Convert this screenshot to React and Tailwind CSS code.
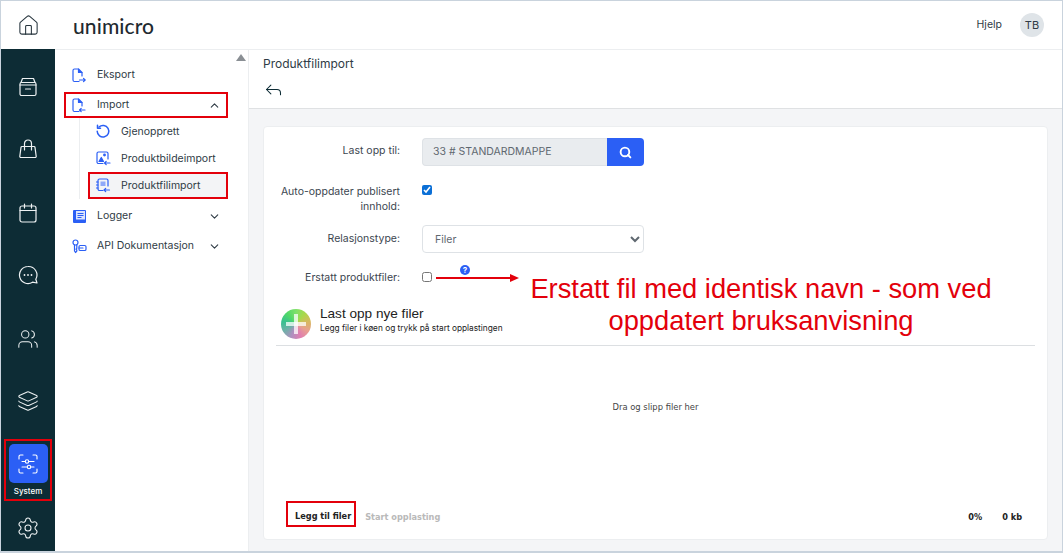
import { ChevronDown, ChevronUp, House, Layers, Reply, Search, Settings, Users } from "lucide-react";

const Rail = ({ children }) => (
  <svg width="20" height="20" viewBox="0 0 20 20" fill="none" stroke="#eef2f3" strokeWidth="1.200" strokeLinecap="round" strokeLinejoin="round">
    {children}
  </svg>
);

const ArchiveIcon = () => (
  <Rail>
    <path d="M3 5.500 4.500 1.500h11L17 5.500" />
    <rect x="2" y="5.500" width="16" height="13" rx="1.500" />
    <path d="M2 8h16M7.500 12h5" />
  </Rail>
);

const BagIcon = () => (
  <Rail>
    <path d="M4 7.500h12a1 1 0 0 1 1 .9l1.200 9a1 1 0 0 1-1 1.100H2.800a1 1 0 0 1-1-1.100l1.200-9a1 1 0 0 1 1-.9z" />
    <path d="M6.500 11V4.500a3.500 3.500 0 0 1 7 0V11" />
  </Rail>
);

const CalendarIcon = () => (
  <Rail>
    <rect x="2" y="3" width="16" height="16" rx="2" />
    <path d="M2 7.500h16M6.500 1v4M13.500 1v4" />
  </Rail>
);

const ChatIcon = () => (
  <Rail>
    <path d="M10 1.500a8.500 8.500 0 1 0 4.500 15.700l4.500.8-1.200-3.800A8.500 8.500 0 0 0 10 1.500z" />
    <path d="M6.500 10h.01M10 10h.01M13.500 10h.01" strokeWidth="1.800" />
  </Rail>
);

const Doc = ({ children }) => (
  <svg width="15" height="15" viewBox="0 0 15 15" fill="none" stroke="#2b5ff5" strokeWidth="1.200" strokeLinecap="round" strokeLinejoin="round">
    {children}
  </svg>
);

const ExportIcon = () => (
  <Doc>
    <path d="M7 13.500H2.500A1.500 1.500 0 0 1 1 12V2.500A1.500 1.500 0 0 1 2.500 1H6.500l3.500 3.500V8" />
    <path d="M6.500 1v3.500H10" fill="#2b5ff5" />
    <path d="M7.500 12h5.500M11.500 10.300l1.700 1.700-1.700 1.700" />
  </Doc>
);

const ImportIcon = () => (
  <Doc>
    <path d="M7 13.500H2.500A1.500 1.500 0 0 1 1 12V2.500A1.500 1.500 0 0 1 2.500 1H6.500l3.500 3.500V8" />
    <path d="M6.500 1v3.500H10" fill="#2b5ff5" />
    <path d="M7.500 12H13M9.200 10.300 7.500 12l1.700 1.700" />
  </Doc>
);

const RestoreIcon = () => (
  <Doc>
    <path d="M3 3a5.800 5.800 0 1 1-1.800 4.300" strokeWidth="1.500" />
    <path d="M1.500 1.200v3h3" strokeWidth="1.500" />
  </Doc>
);

const PhotoIcon = () => (
  <Doc>
    <path d="M7 12.500H2.500A1.500 1.500 0 0 1 1 11V2.500A1.500 1.500 0 0 1 2.500 1h8A1.500 1.500 0 0 1 12 2.500V8" />
    <path d="M3 10.500 5.300 6.500l2.200 4z" fill="#2b5ff5" />
    <circle cx="8.500" cy="4" r=".8" fill="#2b5ff5" />
    <path d="M8.500 12h5.500M10.200 10.300 8.500 12l1.700 1.700" />
  </Doc>
);

const FileImportIcon = () => (
  <Doc>
    <path d="M7 12.500H3.500A1.500 1.500 0 0 1 2 11V2.500A1.500 1.500 0 0 1 3.500 1h7A1.500 1.500 0 0 1 12 2.500V8" />
    <path d="M.5 4H2M.5 7H2M.5 10H2" />
    <rect x="4.500" y="3.500" width="5" height="4.500" fill="#8fa9f8" stroke="none" />
    <path d="M8 12h5.500M9.700 10.300 8 12l1.700 1.700" />
  </Doc>
);

const LogIcon = () => (
  <svg width="15" height="15" viewBox="0 0 15 15">
    <rect x="1" y="1" width="13" height="13" rx="1" fill="#2b5ff5" />
    <rect x="4" y="2" width="9" height="8.500" fill="#dbe4fd" />
    <path d="M5.500 4.500h6M5.500 6.500h6M5.500 8.500h4" stroke="#2b5ff5" strokeWidth="1" />
  </svg>
);

const ApiIcon = () => (
  <Doc>
    <circle cx="3.500" cy="3.500" r="2.500" />
    <path d="M2.500 6v6l1 1.500L4.800 12v-1l-.8-.8.800-.8V6" />
    <rect x="7" y="6.500" width="7" height="5" rx="1.300" />
    <path d="M7 9h4" />
  </Doc>
);

const SystemIcon = () => (
  <svg width="20" height="20" viewBox="0 0 20 20" fill="none" stroke="#fff" strokeWidth="1.100" strokeLinecap="round">
    <path d="M1 5V2.500A1.500 1.500 0 0 1 2.500 1H5M15 1h2.500A1.500 1.500 0 0 1 19 2.500V5M19 15v2.500a1.500 1.500 0 0 1-1.500 1.500H15M5 19H2.500A1.500 1.500 0 0 1 1 17.500V15" />
    <path d="M4 7.500h3M11 7.500h5M4 13h5M13 13h3" />
    <circle cx="9" cy="7.500" r="1.700" />
    <circle cx="11" cy="13" r="1.700" />
  </svg>
);

const MenuRow = ({ icon, label }) => (
  <div className="h-[30px] flex items-center pl-[17px] pr-[7px] text-[#2f3b45]">
    <span className="w-[25px] flex">{icon}</span>
    <span className="flex-1 text-[10.500px]">{label}</span>
    {label !== "Eksport" && <ChevronDown size={13} strokeWidth={2} />}
  </div>
);

const SubRow = ({ icon, label, active }) => (
  <div className={`h-[27px] flex items-center pl-[8px] text-[10.500px] text-[#2f3b45] ${active ? "bg-[#f3f4f6] outline-2 -outline-offset-2 outline-[#e3000b]" : ""}`}>
    <span className="w-[25px] flex">{icon}</span>
    <span>{label}</span>
  </div>
);

export default function App() {
  return (
    <div className="relative w-[1063px] h-[553px] overflow-hidden bg-white border border-[#c9d3dd] border-b-2 flex flex-col font-['Inter',sans-serif]">
      <header className="h-[48px] shrink-0 flex items-center">
        <div className="w-[54px] flex justify-center">
          <House size={23} strokeWidth={1.100} className="text-[#26343d]" />
        </div>
        <span className="ml-[18px] text-[21px] leading-none font-medium tracking-[0.1px] text-[#1f2a30] font-['Lato',sans-serif]">unimicro</span>
        <div className="ml-auto flex items-center pr-[18px]">
          <span className="text-[10.500px] text-[#2f3b45]">Hjelp</span>
          <span className="ml-[18px] w-[24px] h-[24px] rounded-full bg-[#dfe4e8] flex items-center justify-center text-[11px] text-[#2f3b45]">TB</span>
        </div>
      </header>

      <div className="flex-1 flex min-h-0">
        <nav className="w-[54px] shrink-0 bg-[#0d2c35] flex flex-col items-center text-white">
          <div className="mt-[28px]"><ArchiveIcon /></div>
          <div className="mt-[42px]"><BagIcon /></div>
          <div className="mt-[44px]"><CalendarIcon /></div>
          <div className="mt-[42px]"><ChatIcon /></div>
          <Users size={22} strokeWidth={1.100} className="text-[#eef2f3] mt-[43px]" />
          <Layers size={22} strokeWidth={1.100} className="text-[#eef2f3] mt-[40px]" />
          <div className="mt-[28px] w-[46px] h-[60px] flex flex-col items-center outline-2 -outline-offset-1 outline-[#e3000b] pt-[4px]">
            <div className="w-[39px] h-[39px] rounded-[5px] bg-[#2b5ff5] flex items-center justify-center">
              <SystemIcon />
            </div>
            <span className="mt-[3px] text-[8px] leading-[10px] font-medium">System</span>
          </div>
          <Settings size={24} strokeWidth={1.050} className="text-[#eef2f3] mt-[16px]" />
        </nav>

        <aside className="relative w-[194px] shrink-0 border-r border-t border-[#eceef0] pt-[10px]">
          <div className="absolute right-[2px] top-[4px] w-0 h-0 border-l-[5px] border-r-[5px] border-b-[7px] border-l-transparent border-r-transparent border-b-[#8a8f94]" />
          <div className="w-[173px]">
            <MenuRow icon={<ExportIcon />} label="Eksport" />
          </div>
          <div className="w-[162px] ml-[10px]">
            <div className="h-[24px] my-[3px] flex items-center pl-[7px] pr-[6px] text-[#2f3b45] outline-2 -outline-offset-1 outline-[#e3000b]">
              <span className="w-[25px] flex"><ImportIcon /></span>
              <span className="flex-1 text-[10.500px]">Import</span>
              <ChevronUp size={13} strokeWidth={2} />
            </div>
          </div>
          <div className="ml-[24px] w-[149px] -mt-[2px] border-l border-[#eceef0] pl-[8px]">
            <SubRow icon={<RestoreIcon />} label="Gjenopprett" />
            <SubRow icon={<PhotoIcon />} label="Produktbildeimport" />
            <SubRow icon={<FileImportIcon />} label="Produktfilimport" active />
          </div>
          <div className="w-[173px] mt-[2px]">
            <MenuRow icon={<LogIcon />} label="Logger" />
            <MenuRow icon={<ApiIcon />} label="API Dokumentasjon" />
          </div>
        </aside>

        <main className="flex-1 flex flex-col min-w-0 bg-[#f4f5f7]">
          <div className="h-[60px] shrink-0 bg-white border-t border-b border-t-[#eceef0] border-b-[#dfe1e3] pl-[14px] pt-[6px]">
            <div className="text-[12px] leading-[16px] font-normal text-[#2f3b45]">Produktfilimport</div>
            <Reply size={21} strokeWidth={1.200} className="text-[#0d2c35] mt-[7px]" />
          </div>

          <div className="flex-1 min-h-0 pt-[17px] pl-[14px] pr-[14px] pb-[11px]">
            <section className="h-full bg-white rounded-[4px] border border-[#eceef0] pl-[12px] pr-[12px] flex flex-col">
              <div className="pt-[11px] flex items-center h-[39px] shrink-0">
                <label className="w-[124px] text-right text-[10.500px] text-[#3c4650] -mt-[3px]">Last opp til:</label>
                <div className="ml-[22px] flex">
                  <div className="w-[185px] h-[28px] bg-[#e9ecef] rounded-l-[4px] border border-[#dee2e6] border-r-0 flex items-center pl-[10px] text-[10.500px] text-[#5f6870]">33 # STANDARDMAPPE</div>
                  <button className="w-[37px] h-[28px] bg-[#2b5ff5] rounded-r-[4px] flex items-center justify-center">
                    <Search size={13} strokeWidth={3.500} className="text-white" />
                  </button>
                </div>
              </div>

              <div className="mt-[18px] flex shrink-0">
                <label className="w-[124px] text-right text-[10.500px] leading-[15px] text-[#3c4650]">Auto-oppdater publisert innhold:</label>
                <input type="checkbox" defaultChecked className="ml-[22px] mt-[1px] w-[10px] h-[10px] accent-[#0b6fd6]" />
              </div>

              <div className="mt-[11px] flex items-center shrink-0">
                <label className="w-[124px] text-right text-[10.500px] text-[#3c4650]">Relasjonstype:</label>
                <select defaultValue="Filer" className="ml-[22px] w-[222px] h-[28px] pl-[8px] bg-white border border-[#dee2e6] rounded-[4px] text-[10.500px] text-[#5f6870]">
                  <option>Filer</option>
                </select>
              </div>

              <div className="relative mt-[17px] flex items-center shrink-0 h-[14px]">
                <label className="w-[124px] mt-[2px] text-right text-[10.500px] text-[#3c4650]">Erstatt produktfiler:</label>
                <input type="checkbox" className="ml-[22px] w-[10px] h-[10px]" />
                <span className="absolute left-[184px] -top-[5px] w-[10px] h-[10px] rounded-full bg-[#2b5ff5] text-white text-[8px] leading-[10px] font-bold text-center">?</span>
              </div>

              <div className="mt-[24px] flex h-[34px] shrink-0 pl-[5px]">
                <div className="relative mt-[1px] w-[30px] h-[30px] rounded-full bg-[conic-gradient(#7fe06a,#a9d84a,#d8b860,#e8a090,#e07fb0,#b08fc0,#6fb0a8,#38c090,#50d868,#7fe06a)] flex items-center justify-center">
                  <span className="absolute w-[4px] h-[20px] bg-white/75" />
                  <span className="absolute w-[20px] h-[4px] bg-white/75" />
                </div>
                <div className="ml-[9px] -mt-[2px]">
                  <div className="text-[13.600px] leading-[16px] text-[#222] font-['Liberation_Sans',sans-serif]">Last opp nye filer</div>
                  <div className="text-[8.300px] leading-[12px] text-[#222]">Legg filer i køen og trykk på start opplastingen</div>
                </div>
              </div>

              <div className="mt-[3px] border-t border-[#dcdfe2] shrink-0" />

              <div className="flex-1 flex items-center justify-center pb-[34px] text-[8.400px] text-[#444] font-['DejaVu_Sans',sans-serif]">Dra og slipp filer her</div>

              <div className="h-[24px] mb-[13px] shrink-0 flex items-center pl-[11px] pr-[13px] text-[8.200px] font-bold font-['DejaVu_Sans',sans-serif]">
                <span className="h-[24px] pl-[8px] pr-[4px] pt-[5px] flex items-center outline-2 -outline-offset-1 outline-[#e3000b] text-[#222]">Legg til filer</span>
                <span className="ml-[10px] pt-[6px] text-[#b9b9b9]">Start opplasting</span>
                <span className="ml-auto pt-[6px] text-[#222]">0%</span>
                <span className="ml-[20px] pt-[6px] text-[#222]">0 kb</span>
              </div>
            </section>
          </div>
        </main>
      </div>

      <div className="absolute left-[435px] top-[276px] w-[76px] h-[2px] bg-[#e3000b]" />
      <div className="absolute left-[509px] top-[273px] w-0 h-0 border-t-[4px] border-b-[4px] border-l-[9px] border-t-transparent border-b-transparent border-l-[#e3000b]" />
      <div className="absolute left-[500px] top-[272px] w-[520px] text-center text-[27.300px] leading-[32px] text-[#e3000b] font-['Liberation_Sans',sans-serif]">
        Erstatt fil med identisk navn - som ved oppdatert bruksanvisning
      </div>
    </div>
  );
}
